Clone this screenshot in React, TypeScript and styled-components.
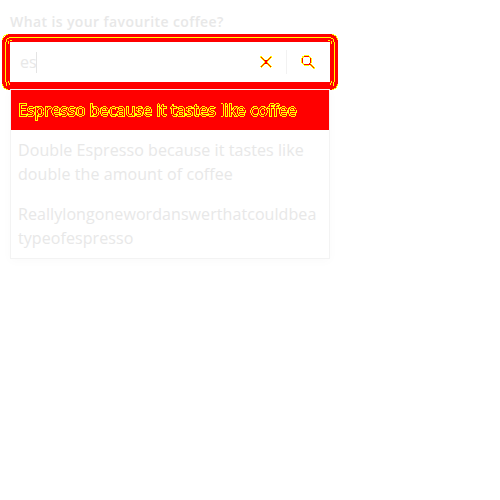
import React from 'react';
import styled, { createGlobalStyle } from 'styled-components';

const GlobalStyle = createGlobalStyle`
  * { box-sizing: border-box; }
  body { margin: 0; background: #fff; font-family: "Open Sans", sans-serif; color: #e8e8e8; }
`;
const Page = styled.main`
  width: 500px;
  height: 500px;
  padding: 10px;
  overflow: hidden;
`;
const Field = styled.div`
  width: 320px;
`;
const Label = styled.label`
  display: block;
  height: 32px;
  font-size: 14px;
  line-height: 24px;
  font-weight: 600;
  letter-spacing: 0.4px;
`;
const SearchBox = styled.div`
  position: relative;
  display: flex;
  align-items: center;
  height: 40px;
  padding-left: 10px;
  background: #fff;
`;
const FocusRing = styled.svg`
  position: absolute;
  left: -8px;
  top: -8px;
  pointer-events: none;
`;
const Query = styled.span`
  flex: 1;
  display: flex;
  align-items: center;
  font-size: 16px;
  line-height: 24px;
`;
const Caret = styled.i`
  width: 1px;
  height: 21px;
  margin-left: -1px;
  background: #e4e4e4;
`;
const IconButton = styled.button`
  display: flex;
  align-items: center;
  justify-content: center;
  width: 40px;
  height: 40px;
  padding: 0;
  border: 0;
  background: none;
`;
const Divider = styled.i`
  width: 1px;
  height: 24px;
  margin-right: 3px;
  background: #f2f2f2;
`;
const SearchIcon = styled.svg`
  margin-right: 4px;
`;
const Filters = styled.svg`
  position: absolute;
  width: 0;
  height: 0;
`;
const Listbox = styled.ul`
  position: relative;
  margin: 7px 0 0;
  padding: 0;
  list-style: none;
  background: #fff;
  border: 1px solid #f3f3f3;
  box-shadow: 0 2px 10px rgba(0, 0, 0, 0.025);
`;
const Option = styled.li<{ $active?: boolean }>`
  padding: 8px 7px;
  font-size: 16px;
  line-height: 24px;
  letter-spacing: ${p => (p.$active ? '0.1px' : '0.075px')};
  overflow-wrap: anywhere;
  color: ${p => (p.$active ? '#f00' : '#e8e8e8')};
  background: ${p => (p.$active ? '#f00' : '#fff')};
  -webkit-text-stroke: ${p => (p.$active ? '1.4px #ff0' : '0')};
  paint-order: stroke fill;
  filter: ${p => (p.$active ? 'url(#hard-edges)' : 'none')};
`;

export default function App() {
  return (
    <>
      <GlobalStyle />
      <Filters aria-hidden="true">
        <filter id="hard-edges" x="0" y="0" width="1" height="1" colorInterpolationFilters="sRGB">
          <feComponentTransfer>
            <feFuncG type="discrete" tableValues="0 0 1 1 1" />
          </feComponentTransfer>
        </filter>
      </Filters>
      <Page>
        <Field>
          <Label>What is your favourite coffee?</Label>
          <SearchBox>
            <FocusRing width="336" height="56" viewBox="0 0 336 56" fill="none" shapeRendering="crispEdges">
              <path fill="#f00" fillRule="evenodd" d="M5 0H331L336 5V51L332 56H4L0 51V5ZM8 8V48H328V8Z" />
              <path fill="#ff0" d="M7 3H329V4H7ZM3 8H4V48H3ZM332 8H333V48H332Z" />
              <path fill="#ff0" d="M5 4H7V5H5ZM4 5H5V8H4ZM329 4H331V5H329ZM331 5H332V8H331ZM4 48H5V52H4ZM331 48H332V52H331Z" />
              <path fill="#ff0" d="M4 0H6V1H4ZM2 1H4V2H2ZM1 2H2V4H1ZM0 4H1V6H0ZM330 0H332V1H330ZM332 1H334V2H332ZM334 2H335V4H334ZM335 4H336V6H335Z" />
              <path fill="#ff0" d="M0 50H1V52H0ZM1 52H2V54H1ZM2 54H4V55H2ZM4 55H6V56H4ZM335 50H336V52H335ZM334 52H335V54H334ZM332 54H334V55H332ZM330 55H332V56H330Z" />
              <path fill="#ff0" d="M8 6H10V7H8ZM6 7H7V10H6ZM326 6H328V7H326ZM329 7H330V10H329ZM6 47H7V49H6ZM7 49H8V51H7ZM329 47H330V49H329ZM328 49H329V51H328Z" />
            </FocusRing>
            <Query>es<Caret /></Query>
            <IconButton aria-label="Clear">
              <svg width="14" height="14" viewBox="0 0 14 14" fill="none" shapeRendering="crispEdges">
                <path stroke="#ff0" strokeWidth="2" d="M1.5 1.5L12.5 12.5M12.5 1.5L1.5 12.5" />
                <path stroke="#f00" strokeWidth="1.2" d="M2 2L12 12M12 2L2 12" />
                <path fill="#f00" d="M6 5H8V9H6Z" />
              </svg>
            </IconButton>
            <Divider />
            <IconButton aria-label="Search">
              <SearchIcon width="16" height="16" viewBox="0 0 16 16" fill="none" shapeRendering="crispEdges">
                <path stroke="#ff0" strokeWidth="2" d="M10 10L15 15" />
                <circle cx="6.5" cy="6.5" r="4.9" stroke="#ff0" strokeWidth="1.5" />
                <path fill="#f00" d="M4 2H9V3H4ZM4 10H10V11H4ZM2 4H3V9H2ZM10 4H11V9H10Z" />
                <path stroke="#f00" strokeWidth="1.2" d="M9.5 9.5L14.5 14.5" />
              </SearchIcon>
            </IconButton>
          </SearchBox>
          <Listbox>
            <Option $active>Espresso because it tastes like coffee</Option>
            <Option>Double Espresso because it tastes like double the amount of coffee</Option>
            <Option>Reallylongonewordanswerthatcouldbea typeofespresso</Option>
          </Listbox>
        </Field>
      </Page>
    </>
  );
}
